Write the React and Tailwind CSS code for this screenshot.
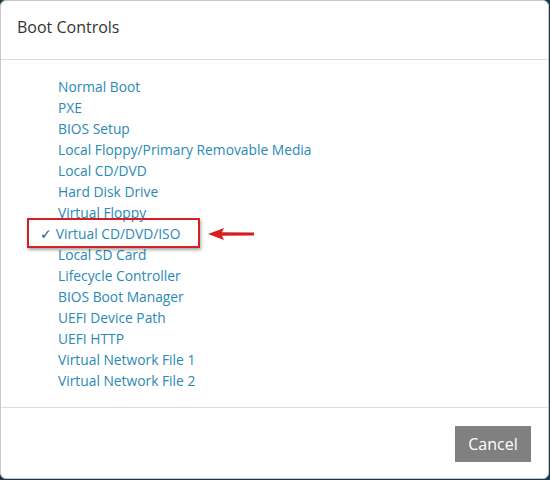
import React from 'react';

const options = [
  'Normal Boot',
  'PXE',
  'BIOS Setup',
  'Local Floppy/Primary Removable Media',
  'Local CD/DVD',
  'Hard Disk Drive',
  'Virtual Floppy',
  'Virtual CD/DVD/ISO',
  'Local SD Card',
  'Lifecycle Controller',
  'BIOS Boot Manager',
  'UEFI Device Path',
  'UEFI HTTP',
  'Virtual Network File 1',
  'Virtual Network File 2',
];

const selected = 'Virtual CD/DVD/ISO';

const App = () => {
  return (
    <div className="w-[550px] h-[480px] bg-[#163a4c]" style={{ fontFamily: '"Open Sans", "Liberation Sans", sans-serif' }}>
      <div className="relative w-[549px] h-[479px] bg-white border border-[#c8c8c8] rounded-[6px] flex flex-col">
        {/* header */}
        <div className="h-[59px] border-b border-[#dcdcdc] flex items-center pl-4">
          <h1 className="text-[16px] text-[#333] -mt-[6px]">Boot Controls</h1>
        </div>

        {/* list */}
        <div className="flex-1 pt-[16px] border-b border-[#dcdcdc]">
          <ul className="flex flex-col">
            {options.map((opt) => (
              <li key={opt} className="h-[21px] leading-[21px] text-[13.8px] text-[#2a89b6]">
                {opt === selected ? (
                  <span className="pl-[39px]">
                    <span className="text-[#1b5f8c] font-bold mr-[4px] text-[14px] [font-family:'DejaVu_Sans',sans-serif]">✓</span>
                    {opt}
                  </span>
                ) : (
                  <span className="pl-[57px]">{opt}</span>
                )}
              </li>
            ))}
          </ul>
        </div>

        {/* footer */}
        <div className="h-[70px] flex items-center justify-end pr-[17px]">
          <button className="w-[76px] h-[36px] bg-[#808080] text-white text-[16px] mt-[2px]">
            Cancel
          </button>
        </div>

        {/* annotation */}
        <div className="absolute left-[26px] top-[217px] w-[173px] h-[30px] border-2 border-[#d42020] shadow-[1px_2px_3px_rgba(0,0,0,0.35)]" />
        <svg className="absolute left-[206px] top-[225px]" width="50" height="16" viewBox="0 0 50 16">
          <path d="M1 8 L17 2 L15 6.3 L47 6.6 L47 9.4 L15 9.7 L17 14 Z" fill="#d42020" />
        </svg>
      </div>
    </div>
  );
};

export default App;
